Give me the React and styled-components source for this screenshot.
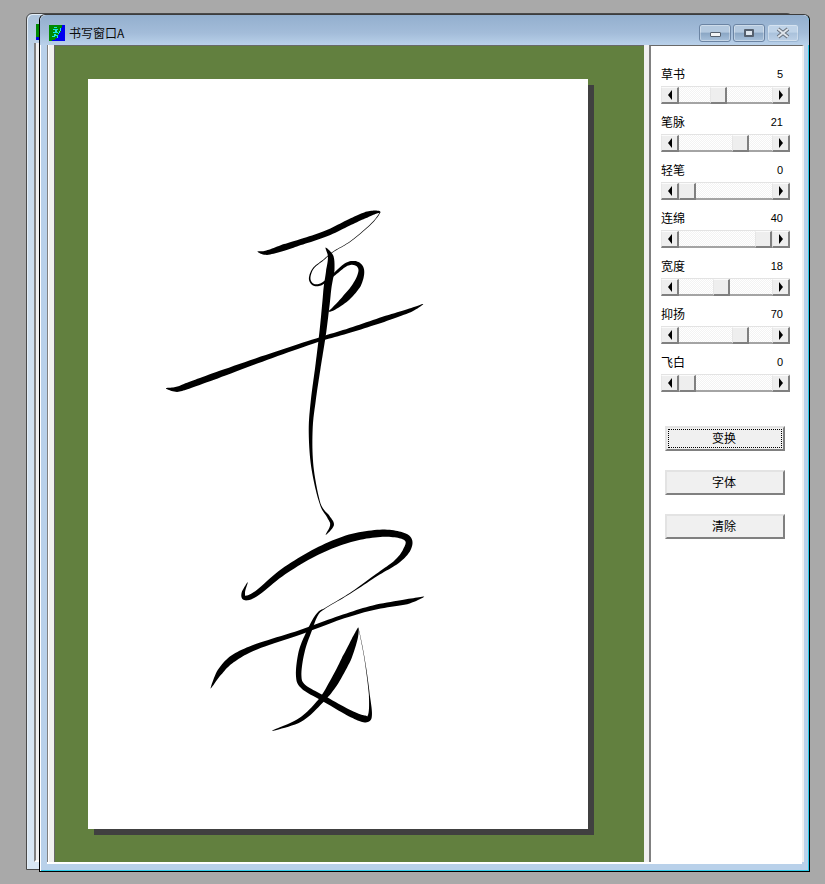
import React from "react";
import styled, { createGlobalStyle, css } from "styled-components";

const Global = createGlobalStyle`
  html, body { margin: 0; padding: 0; background: #a9a9a9; overflow: hidden; }
  * { box-sizing: border-box; }
`;

const Desktop = styled.div`
  position: relative;
  width: 825px;
  height: 884px;
  background: #a9a9a9;
  overflow: hidden;
  font-family: "Noto Sans CJK SC", "Liberation Sans", sans-serif;
  font-size: 12px;
  color: #000;
`;

const BackWindow = styled.div`
  position: absolute;
  left: 26px;
  top: 13px;
  width: 767px;
  height: 857px;
  display: flex;
  flex-direction: column;
  padding: 10px 0 7px 7px;
  border: 1px solid #4a4a4a;
  border-radius: 6px 6px 0 0;
  background: linear-gradient(#adc4dc 0, #c2d6ea 40px, #cfe0f0 300px, #d9e7f4 100%);
  box-shadow: inset 1px 1px 0 #e4eef7;
`;

const BackIcon = styled.div`
  width: 16px;
  height: 16px;
  margin-left: 2px;
  background: linear-gradient(#008a00 0 13px, #0000e0 13px);
`;

const BackClient = styled.div`
  flex: 1;
  margin-top: 3px;
  border-left: 2px solid #808080;
  border-bottom: 2px solid #fff;
  background: #f0f0f0;
`;

const Window = styled.div`
  position: absolute;
  left: 39px;
  top: 14px;
  width: 771px;
  height: 858px;
  display: flex;
  flex-direction: column;
  border: 1px solid #000;
  border-top-color: #3c3c3c;
  border-radius: 6px 6px 0 0;
  background: #b9d1ea;
  box-shadow: inset 1px 1px 0 #fff, inset -1px -1px 0 #2ecbe8;
`;

const TitleBar = styled.div`
  height: 30px;
  flex: none;
  display: flex;
  align-items: center;
  padding: 6px 10px 0 9px;
  border-radius: 6px 6px 0 0;
  background: linear-gradient(#93afce, #a3bcd9 60%, #b9d1ea);
`;

const AppIcon = styled.svg`
  width: 16px;
  height: 16px;
  flex: none;
`;

const Title = styled.span`
  margin-left: 4px;
  flex: 1;
  font-size: 12px;
  line-height: 16px;
  color: #0a0a0a;
`;

const CaptionButtons = styled.div`
  display: flex;
  gap: 2px;
`;

const CaptionButton = styled.div`
  width: 32px;
  height: 18px;
  display: flex;
  align-items: center;
  justify-content: center;
  border: 1px solid ${(p) => (p.$dim ? "#9cb7d3" : "#6b84a3")};
  border-radius: 3px;
  background: ${(p) =>
    p.$dim
      ? "linear-gradient(#bfd3e8 0 45%, #a9c1db 50%, #bcd0e6)"
      : "linear-gradient(#b4c9df 0 45%, #8aa6c4 50%, #a8c1db)"};
  box-shadow: inset 0 0 0 1px rgba(255, 255, 255, 0.35);
`;

const GlyphMin = styled.div`
  width: 11px;
  height: 5px;
  margin-top: 3px;
  border: 1px solid #55606e;
  border-radius: 1px;
  background: #f2f4f6;
`;

const GlyphMax = styled.div`
  width: 10px;
  height: 8px;
  border: 2px solid #55606e;
  border-radius: 1px;
  background: #dfe7ef;
`;

const GlyphClose = styled.svg`
  width: 14px;
  height: 12px;
`;

const Client = styled.div`
  flex: 1;
  min-height: 0;
  display: flex;
  margin: 0 7px 7px 7px;
  background: #f0f0f0;
  border-bottom: 2px solid #fff;
`;

const Gutter = styled.div`
  width: 8px;
  flex: none;
  border-left: 1px solid #808080;
  border-right: 1px solid #696969;
  background: linear-gradient(90deg, #fff 0 1px, #f0f0f0 1px);
`;

const Canvas = styled.div`
  width: 589px;
  flex: none;
  padding: 33px 0 0 33px;
  background: #62803f;
  border-top: 1px solid #696969;
`;

const Paper = styled.div`
  width: 500px;
  height: 750px;
  background: #fff;
  box-shadow: 6px 6px 0 #404040;
`;

const Ink = styled.svg`
  display: block;
  width: 500px;
  height: 750px;
`;

const Splitter = styled.div`
  width: 5px;
  flex: none;
  background: #f0f0f0;
`;

const Panel = styled.div`
  flex: 1;
  display: flex;
  flex-direction: column;
  padding: 18px 12px 0 10px;
  background: #fff;
  border-top: 1px solid #696969;
  border-left: 2px solid #808080;
  border-right: 2px solid #f0f0f0;
`;

const Group = styled.div`
  height: 48px;
  flex: none;
`;

const LabelRow = styled.div`
  height: 19px;
  display: flex;
  justify-content: space-between;
  align-items: center;
  padding-right: 7px;
  font-size: 12px;
  line-height: 14px;
`;

const Value = styled.span`
  font-family: "Liberation Sans", sans-serif;
  font-size: 11px;
`;

const Scrollbar = styled.div`
  display: flex;
  width: 129px;
  height: 18px;
  margin-top: 3px;
  border-top: 1px solid #e3e3e3;
  background-color: #fff;
  background-image: conic-gradient(#f3f3f3 25%, #fff 0 50%, #f3f3f3 0 75%, #fff 0);
  background-size: 2px 2px;
`;

const raised = css`
  background: #eeeeee;
  border-top: 1px solid #fbfbfb;
  border-left: 1px solid #e6e6e6;
  border-right: 2px solid #808080;
  border-bottom: 2px solid #808080;
`;

const Arrow = styled.div`
  ${raised}
  width: 18px;
  flex: none;
  display: flex;
  align-items: center;
  justify-content: center;
  &::before {
    content: "";
    border-top: 5px solid transparent;
    border-bottom: 5px solid transparent;
    ${(p) => (p.$dir === "left" ? "border-right: 4px solid #000;" : "border-left: 4px solid #000;")}
  }
`;

const Track = styled.div`
  flex: 1;
  display: flex;
  border-bottom: 2px solid #a4a4a4;
`;

const Thumb = styled.div`
  ${raised}
  width: 17px;
  margin-bottom: -2px;
  margin-left: ${(p) => p.$offset}px;
`;

const ActionButton = styled.button`
  display: flex;
  align-items: center;
  justify-content: center;
  width: 120px;
  height: 25px;
  margin: 0 0 19px 4px;
  padding: 0 2px 2px 0;
  font: inherit;
  color: #000;
  background: #f0f0f0;
  border: 0;
  border-top: 2px solid #e3e3e3;
  border-left: 2px solid #e3e3e3;
  border-right: 2px solid #808080;
  border-bottom: 2px solid #808080;
  position: relative;
  ${(p) =>
    p.$focused &&
    css`
      &::after {
        content: "";
        position: absolute;
        inset: 1px;
        border: 1px dotted #000;
      }
    `}
`;

const ButtonSpacer = styled.div`
  height: 26px;
  flex: none;
`;

/* Builds a filled brush stroke from centre-line points [x, y, width]. */
function brush(points, ox, oy) {
  const pts = points.map(([x, y, w]) => [ox + x / 3 - 88, oy + y / 3 - 79, w > 1 ? w * 1.3 : w]);
  const left = [];
  const right = [];
  const at = (i) => pts[Math.max(0, Math.min(pts.length - 1, i))];
  for (let i = 0; i < pts.length - 1; i++) {
    const [p0, p1, p2, p3] = [at(i - 1), at(i), at(i + 1), at(i + 2)];
    for (let s = 0; s < 10; s++) {
      const t = s / 10;
      const cr = (k, d) =>
        d
          ? 0.5 * (p2[k] - p0[k] + 2 * t * (2 * p0[k] - 5 * p1[k] + 4 * p2[k] - p3[k]) + 3 * t * t * (3 * p1[k] - p0[k] - 3 * p2[k] + p3[k]))
          : 0.5 * (2 * p1[k] + (p2[k] - p0[k]) * t + (2 * p0[k] - 5 * p1[k] + 4 * p2[k] - p3[k]) * t * t + (3 * p1[k] - p0[k] - 3 * p2[k] + p3[k]) * t * t * t);
      const x = cr(0);
      const y = cr(1);
      const dx = cr(0, 1);
      const dy = cr(1, 1);
      const len = Math.hypot(dx, dy) || 1;
      const w = (p1[2] + (p2[2] - p1[2]) * t) / 2;
      left.push(`${(x - (dy / len) * w).toFixed(2)} ${(y + (dx / len) * w).toFixed(2)}`);
      right.push(`${(x + (dy / len) * w).toFixed(2)} ${(y - (dx / len) * w).toFixed(2)}`);
    }
  }
  const last = pts[pts.length - 1];
  left.push(`${last[0]} ${last[1]}`);
  return `M${left.join("L")}L${right.reverse().join("L")}Z`;
}

const upper = [
  [
    [322, 155, 0.3], [350, 158, 3.5], [400, 143, 5], [450, 127, 4.5], [530, 100, 4.5], [600, 66, 4.8],
    [650, 44, 4.6], [682, 36, 2], [688, 41, 0.7], [660, 75, 0.7], [600, 125, 0.6], [550, 155, 0.6],
    [520, 180, 0.8], [490, 205, 1], [479, 235, 1.2], [490, 254, 1.4], [515, 252, 1.6], [550, 225, 2],
    [590, 193, 2.6], [620, 191, 3.4], [634, 212, 4.4], [622, 252, 6], [590, 292, 5.6], [552, 325, 2.6], [535, 335, 0.3],
  ],
  [
    [527, 143, 0.5], [542, 170, 4.4], [541, 210, 6.4], [533, 260, 6], [528, 310, 5.8], [518, 400, 5.2],
    [504, 500, 4.2], [490, 600, 3.8], [482, 690, 3], [487, 800, 1.8], [510, 910, 0.9], [535, 950, 2.2],
    [546, 975, 3], [527, 1005, 0.3],
  ],
  [
    [48, 565, 0.5], [80, 568, 4], [120, 555, 5], [200, 526, 5], [350, 472, 4], [500, 421, 3],
    [600, 391, 3.6], [700, 358, 4.2], [780, 331, 3], [820, 312, 0.3],
  ],
];

const lower = [
  [
    [143, 172, 0.3], [130, 203, 2.6], [136, 219, 3.6], [170, 205, 4], [250, 140, 5], [350, 80, 5.4],
    [450, 40, 6], [540, 25, 5.6], [600, 30, 5], [626, 46, 5.2], [620, 75, 5.4], [590, 110, 3.6],
    [530, 150, 1.8], [450, 205, 0.8], [380, 247, 0.6], [352, 268, 1.6], [327, 320, 3.6], [305, 380, 4.6],
    [296, 450, 4.2], [310, 485, 4], [370, 520, 4.2], [450, 565, 4.8], [495, 582, 5.4], [510, 570, 3],
    [508, 510, 0.9], [495, 410, 0.4], [480, 330, 0.3], [475, 312, 0.3],
  ],
  [
    [475, 308, 0.5], [465, 340, 4.2], [440, 400, 7], [400, 475, 6.4], [360, 530, 4], [300, 585, 3.2], [215, 618, 0.3],
  ],
  [
    [32, 490, 0.3], [60, 440, 4.4], [100, 400, 5.4], [170, 365, 4.2], [300, 322, 3.4], [420, 278, 3],
    [520, 248, 3.6], [620, 230, 4], [673, 215, 0.3],
  ],
];

const sliders = [
  { label: "草书", value: 5, offset: 31 },
  { label: "笔脉", value: 21, offset: 53 },
  { label: "轻笔", value: 0, offset: 0 },
  { label: "连绵", value: 40, offset: 76 },
  { label: "宽度", value: 18, offset: 34 },
  { label: "抑扬", value: 70, offset: 53 },
  { label: "飞白", value: 0, offset: 0 },
];

export default function App() {
  return (
    <Desktop>
      <Global />
      <BackWindow>
        <BackIcon />
        <BackClient />
      </BackWindow>
      <Window>
        <TitleBar>
          <AppIcon viewBox="0 0 16 16" shapeRendering="crispEdges">
            <rect width="16" height="16" fill="#008a00" />
            <path d="M16 0V16H2L7 14 12 6 13 0Z" fill="#0000f0" />
            <path d="M5 2h3v1H5zM4 4h5v1H4zM6 5h2v2H6zM4 7h3v1H4zM7 7h2v1H7zM9 8h1v1H9zM5 9h2v2H5zM3 11h3v1H3zM7 10h2v1H7zM8 11h1v2H8zM11 3h1v3h-1zM10 6h1v2h-1z" fill="#19e6e0" />
          </AppIcon>
          <Title>书写窗口A</Title>
          <CaptionButtons>
            <CaptionButton><GlyphMin /></CaptionButton>
            <CaptionButton><GlyphMax /></CaptionButton>
            <CaptionButton $dim>
              <GlyphClose viewBox="0 0 14 12">
                <path d="M2 2L12 10M12 2L2 10" stroke="#66707c" strokeWidth="4" />
                <path d="M2 2L12 10M12 2L2 10" stroke="#dfe5ec" strokeWidth="2" />
              </GlyphClose>
            </CaptionButton>
          </CaptionButtons>
        </TitleBar>
        <Client>
          <Gutter />
          <Canvas>
            <Paper>
              <Ink viewBox="0 0 500 750">
                {upper.map((s, i) => <path key={i} d={brush(s, 150, 200)} fill="#000" />)}
                {lower.map((s, i) => <path key={i} d={brush(s, 200, 525)} fill="#000" />)}
              </Ink>
            </Paper>
          </Canvas>
          <Splitter />
          <Panel>
            {sliders.map((s) => (
              <Group key={s.label}>
                <LabelRow>
                  <span>{s.label}</span>
                  <Value>{s.value}</Value>
                </LabelRow>
                <Scrollbar>
                  <Arrow $dir="left" />
                  <Track><Thumb $offset={s.offset} /></Track>
                  <Arrow $dir="right" />
                </Scrollbar>
              </Group>
            ))}
            <ButtonSpacer />
            <ActionButton $focused>变换</ActionButton>
            <ActionButton>字体</ActionButton>
            <ActionButton>清除</ActionButton>
          </Panel>
        </Client>
      </Window>
    </Desktop>
  );
}
